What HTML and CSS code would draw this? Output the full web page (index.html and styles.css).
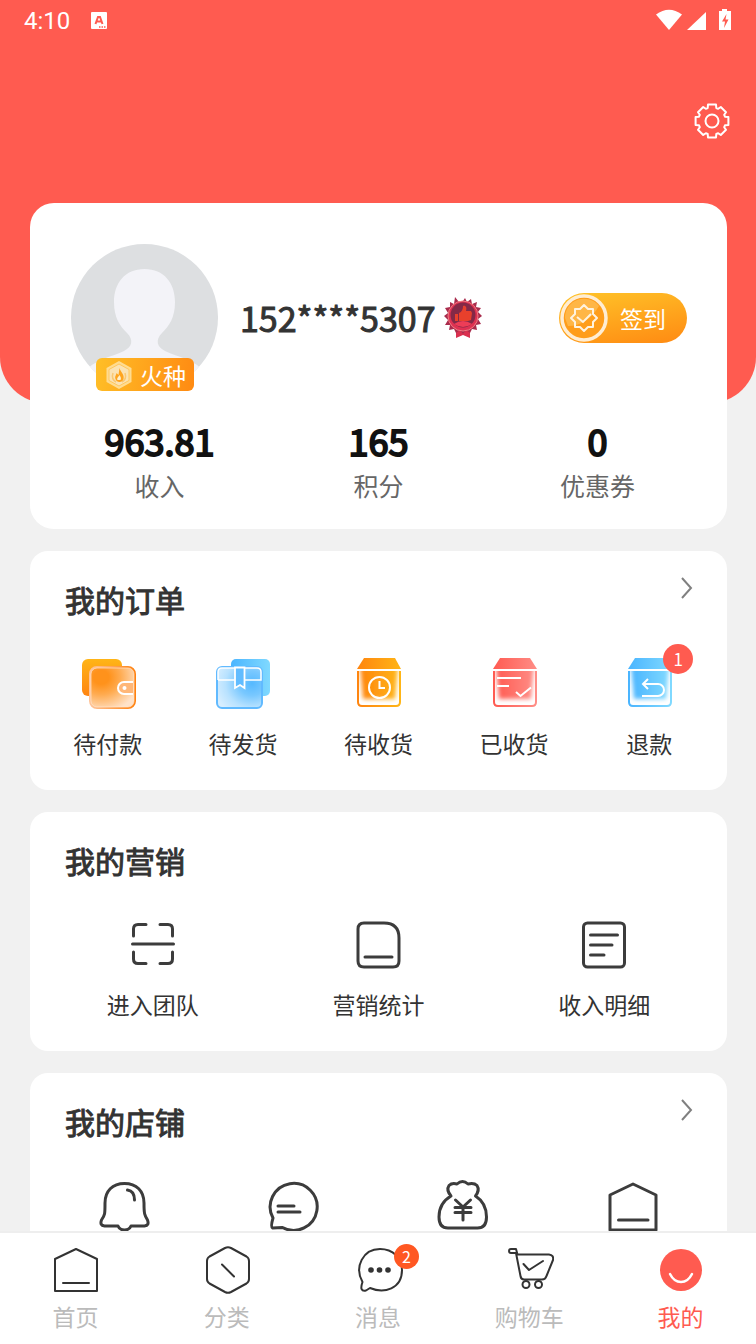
FILE: index.html
```html
<!DOCTYPE html>
<html lang="zh-CN">
<head>
  <meta charset="UTF-8">
  <meta name="viewport" content="width=device-width, initial-scale=1.0">
  <title>我的</title>
  <link rel="stylesheet" href="styles.css">
</head>
<body>
  <div class="screen">
    <header class="hero">
      <div class="status-bar">
        <span class="time">4:10</span>
        <svg class="app-icon" width="18" height="18" viewBox="0 0 18 18">
          <rect x="1" y="0" width="16" height="17" rx="1" fill="#fff"/>
          <path d="M5.500 12L8 5h2l2.500 7M7 9.500h4" fill="none" stroke="#ff5b50" stroke-width="2"/>
          <path d="M9 15h7" stroke="#ff5b50" stroke-width="1.500" stroke-dasharray="1.500 1"/>
        </svg>
        <svg class="signals" width="78" height="24" viewBox="0 0 78 24" fill="#fff">
          <path d="M0 5.500Q13-4 26 5.500L13 21z"/>
          <path d="M31 21L50 3v18z"/>
          <path d="M66 0h5v2h4v19H63V2h3z"/>
          <path d="M70.500 5L66 12.500h3l-1 6.500 4.500-8.500h-3z" fill="#ff5b50"/>
        </svg>
      </div>
      <button class="settings" type="button" aria-label="设置">
        <svg width="40" height="40" viewBox="-20 -20 40 40" fill="none" stroke="#fff" stroke-width="2" stroke-linejoin="round">
          <path d="M-4.300-13L-4-16.400H4L4.300-13L6.200-12.200L8.800-14L14-8.800L12.200-6.200L13-4.300L16.400-4V4L13 4.300L12.200 6.200L14 8.800L8.800 14L6.200 12.200L4.300 13L4 16.400H-4L-4.300 13L-6.200 12.200L-8.800 14L-14 8.800L-12.200 6.200L-13 4.300L-16.400 4V-4L-13-4.300L-12.200-6.200L-14-8.800L-8.800-14L-6.200-12.200Z"/>
          <circle r="6.500"/>
        </svg>
      </button>
    </header>

    <main class="content">
      <section class="card profile">
        <div class="user">
          <div class="avatar">
            <svg class="avatar-img" viewBox="0 0 147 147">
              <defs><clipPath id="round"><circle cx="73.500" cy="73.500" r="73.500"/></clipPath></defs>
              <g clip-path="url(#round)">
                <rect width="147" height="147" fill="#dddfe1"/>
                <path d="M73.500 25C93 25 104 39 104 58C104 74 98 82 91 89C84 96 86 103 94 107C107 113 124 116 134 128V147H13V128C23 116 40 113 53 107C61 103 63 96 56 89C49 82 43 74 43 58C43 39 54 25 73.500 25Z" fill="#f3f3f8"/>
              </g>
            </svg>
            <span class="level">
              <svg width="28" height="30" viewBox="0 0 28 30">
                <path d="M14 1L26.500 8V22L14 29L1.500 22V8z" fill="#ffdc91"/>
                <path d="M14 4L24 9.500V20.500L14 26L4 20.500V9.500z" fill="#fbe3b4" stroke="#ffc75e"/>
                <path d="M8 13q-2 6 3 9M20 13q2 6-3 9" fill="none" stroke="#f9c873" stroke-width="1.500"/>
                <path d="M14.500 8c1 4 5 6 4 11-1 4-7 4-8 0-1-3 1-4 1-6l2 2z" fill="#ffa51f"/>
                <path d="M14.500 15c1 2 2 3 1 5h-3c-1-2 1-3 2-5z" fill="#fff0cb"/>
              </svg>
              火种
            </span>
          </div>
          <h1 class="name">152****5307</h1>
          <svg class="medal" width="38" height="44" viewBox="0 0 38 44">
            <path d="M12 32h14v10l-7-3-7 3z" fill="#d9304f"/>
            <path d="M19 5L21 2L23 6L27 3L28 8L33 6L32 11L37 12L34 16L38 20L34 23L37 28L32 29L33 34L28 33L26 37L22 34L19 38L16 34L12 37L10 33L5 34L6 29L1 29L4 24L0 20L4 17L1 12L6 11L6 6L10 8L11 1L15 6Z" fill="#a92c4d"/>
            <circle cx="19" cy="20" r="15" fill="#df3152" stroke="#ee7d82"/>
            <circle cx="19" cy="19" r="12.500" fill="#842947"/>
            <path d="M10 28q9-6 18 0-9 6-18 0z" fill="#ed3d57"/>
            <path d="M11 18h3v7h-3zM15 17c3-1 4-4 4-7 3-1 4 2 3 5h5l1 2-1 7-3 1h-9z" fill="#e8402c"/>
          </svg>
          <button class="sign" type="button">
            <svg width="50" height="50" viewBox="0 0 50 50" fill="none">
              <circle cx="25" cy="25" r="22" fill="#ff9d1a" stroke="#ffedd2" stroke-width="3.500"/>
              <path d="M6 25a19 19 0 0 1 34-12Q28 33 9 33z" fill="#ffc05a" opacity=".7"/>
              <path d="M25 12l4 4h5v5l4 4-4 4v5h-5l-4 4-4-4h-5v-5l-4-4 4-4v-5h5z" stroke="#fff3df" stroke-width="2" stroke-linejoin="round"/>
              <path d="M18 24l6 5 8-8" stroke="#fff3df" stroke-width="2"/>
            </svg>
            <span>签到</span>
          </button>
        </div>
        <div class="stats">
          <a href="#"><strong>963.81</strong><span>收入</span></a>
          <a href="#"><strong>165</strong><span>积分</span></a>
          <a href="#"><strong>0</strong><span>优惠券</span></a>
        </div>
      </section>

      <section class="card">
        <div class="card-head">
          <h2>我的订单</h2>
          <a class="more" href="#" aria-label="全部订单">
            <svg width="14" height="24" viewBox="0 0 14 24"><path d="M2 2l9 10-9 10" fill="none" stroke="#808080" stroke-width="2"/></svg>
          </a>
        </div>
        <nav class="grid five">
          <a class="item" href="#">
            <svg class="icon" viewBox="0 0 60 60">
              <defs>
                <linearGradient id="gold" x2="0" y2="1"><stop stop-color="#ffb517"/><stop offset="1" stop-color="#ff8410"/></linearGradient>
                <linearGradient id="orange" x2="1"><stop stop-color="#ff850f"/><stop offset="1" stop-color="#ffb516"/></linearGradient>
                <linearGradient id="walletEdge" x2="1"><stop stop-color="#ffc499"/><stop offset="1" stop-color="#ff8210"/></linearGradient>
                <radialGradient id="walletFill" cx=".25" cy=".25" r=".85"><stop offset=".2" stop-color="#ff921b"/><stop offset=".5" stop-color="#ffab50"/><stop offset="1" stop-color="#ffe2c8"/></radialGradient>
                <filter id="soft" x="-20%" y="-20%" width="140%" height="140%"><feGaussianBlur stdDeviation="2"/></filter>
                <clipPath id="boxBody"><path d="M11 17H51V50Q51 51 50 51H12Q11 51 11 50Z"/></clipPath>
              </defs>
              <rect x="4" y="5" width="40" height="37" rx="6" fill="url(#gold)"/>
              <rect x="12" y="13" width="45" height="41" rx="7" fill="url(#walletFill)" stroke="url(#walletEdge)" stroke-width="2"/>
              <rect x="13" y="14" width="43" height="39" rx="6" fill="none" stroke="#ffe4cb" opacity=".7"/>
              <path d="M55 28H46a6 6 0 0 0 0 12h9" fill="#ffb778" stroke="#fff" stroke-width="2"/>
              <circle cx="46.500" cy="34" r="2" fill="#fff"/>
            </svg>
            <span>待付款</span>
          </a>
          <a class="item" href="#">
            <svg class="icon" viewBox="0 0 60 60">
              <defs>
                <linearGradient id="blue" x2="1"><stop stop-color="#4ab5ff"/><stop offset="1" stop-color="#80d9ff"/></linearGradient>
                <radialGradient id="parcel" cx=".78" cy=".4" r=".85"><stop stop-color="#55b9ff"/><stop offset=".35" stop-color="#79c8ff"/><stop offset=".7" stop-color="#b8e2ff"/><stop offset="1" stop-color="#d7eeff"/></radialGradient>
              </defs>
              <rect x="18" y="5" width="39" height="37" rx="5" fill="url(#blue)"/>
              <rect x="4" y="13" width="45" height="41" rx="5" fill="url(#parcel)" stroke="#61baff" stroke-width="2"/>
              <path d="M5 26V18q0-4 4-4H44q4 0 4 4V26H5" fill="none" stroke="#fff" stroke-width="1.500"/>
              <path d="M22 13.500H31.500V34L27 31L22 34z" fill="#61bcff" stroke="#fff" stroke-width="1.800"/>
            </svg>
            <span>待发货</span>
          </a>
          <a class="item" href="#">
            <svg class="icon" viewBox="0 0 60 60">
              <path d="M16 4H47L53 15H9z" fill="url(#orange)"/>
              <path d="M10 17V48Q10 52 14 52H48Q52 52 52 48V17" fill="#fff" stroke="url(#orange)" stroke-width="2"/>
              <g clip-path="url(#boxBody)"><path d="M12 12H50L47 45H15z" fill="url(#orange)" filter="url(#soft)"/></g>
              <circle cx="31.500" cy="33.500" r="10.500" fill="none" stroke="#fff" stroke-width="2"/>
              <path d="M31.500 27V34H37" fill="none" stroke="#fff" stroke-width="2"/>
            </svg>
            <span>待收货</span>
          </a>
          <a class="item" href="#">
            <svg class="icon" viewBox="0 0 60 60">
              <defs><linearGradient id="red" x2="1"><stop stop-color="#ff5b52"/><stop offset="1" stop-color="#ff8d86"/></linearGradient></defs>
              <path d="M16 4H46L53 15H9z" fill="url(#red)"/>
              <path d="M10 17V48Q10 52 14 52H48Q52 52 52 48V17" fill="#fff" stroke="url(#red)" stroke-width="2"/>
              <g clip-path="url(#boxBody)"><path d="M12 12H50L47 45H15z" fill="url(#red)" filter="url(#soft)"/></g>
              <path d="M13 24H37M13 32H25M32 38L36.500 42L47 33.500" fill="none" stroke="#fff" stroke-width="2"/>
            </svg>
            <span>已收货</span>
          </a>
          <a class="item" href="#">
            <svg class="icon" viewBox="0 0 60 60">
              <path d="M16 4H46L53 15H9z" fill="url(#blue)"/>
              <path d="M10 17V48Q10 52 14 52H48Q52 52 52 48V17" fill="#fff" stroke="url(#blue)" stroke-width="2"/>
              <g clip-path="url(#boxBody)"><path d="M12 12H50L47 45H15z" fill="url(#blue)" filter="url(#soft)"/></g>
              <path d="M29 25L24 30L29 35M24 30H39a6 6 0 0 1 0 12H23" fill="none" stroke="#fff" stroke-width="2"/>
            </svg>
            <span>退款</span>
            <b class="badge">1</b>
          </a>
        </nav>
      </section>

      <section class="card">
        <div class="card-head">
          <h2>我的营销</h2>
        </div>
        <nav class="grid three">
          <a class="item" href="#">
            <svg class="icon line" viewBox="0 0 60 60">
              <path d="M23 9.500H15Q10.500 9.500 10.500 14V21M37 9.500H45Q49.500 9.500 49.500 14V21M10.500 37V44Q10.500 48.500 15 48.500H23M49.500 37V44Q49.500 48.500 45 48.500H37M9.500 29H50.500"/>
            </svg>
            <span>进入团队</span>
          </a>
          <a class="item" href="#">
            <svg class="icon line" viewBox="0 0 60 60">
              <path d="M16 8H36Q51 8 51 23V46Q51 52 45 52H16Q10 52 10 46V14Q10 8 16 8ZM17 42H44"/>
            </svg>
            <span>营销统计</span>
          </a>
          <a class="item" href="#">
            <svg class="icon line" viewBox="0 0 60 60">
              <rect x="9.500" y="8" width="41" height="44" rx="4"/>
              <path d="M16.500 20H43.500M16.500 30H38M16.500 40H30"/>
            </svg>
            <span>收入明细</span>
          </a>
        </nav>
      </section>

      <section class="card">
        <div class="card-head">
          <h2>我的店铺</h2>
          <a class="more" href="#" aria-label="进入店铺">
            <svg width="14" height="24" viewBox="0 0 14 24"><path d="M2 2l9 10-9 10" fill="none" stroke="#808080" stroke-width="2"/></svg>
          </a>
        </div>
        <nav class="grid four">
          <a class="item" href="#" aria-label="通知">
            <svg class="icon line thin" viewBox="0 0 60 60">
              <path d="M29.500 7.500C41.500 7.500 49 15 49 27C49 38 49.500 39 52.500 44Q54.500 49.500 49.500 50H36Q34.500 54 29.500 54Q24.500 54 23 50H9.500Q4.500 49.500 6.500 44C10 39 10 38 10 27C10 15 17.500 7.500 29.500 7.500ZM32.500 14Q39.500 15 39.500 24"/>
            </svg>
          </a>
          <a class="item" href="#" aria-label="客服">
            <svg class="icon line thin" viewBox="0 0 60 60">
              <path d="M9 42A23.500 23.500 0 1 1 18.500 51.500L8.500 52Q6.500 51 9 42ZM14 30H30M14 36H36"/>
            </svg>
          </a>
          <a class="item" href="#" aria-label="资金">
            <svg class="icon line thin" viewBox="0 0 60 60">
              <path d="M18 20Q13 14 16 9.500Q19 6.500 24 8Q29.500 3 35 8Q41 6.500 44 9.500Q47 14 42.500 20Q53.500 27 53.500 41Q53.500 52 44.500 52H15Q6 52 6 41Q6 27 18 20ZM22.500 24L30 31L37.500 24M22 31.500H38M22 36.500H38M30 31V44"/>
            </svg>
          </a>
          <a class="item" href="#" aria-label="店铺">
            <svg class="icon line thin" viewBox="0 0 60 60">
              <path d="M31 8L54 19V54H8V19ZM16.500 44H46"/>
            </svg>
          </a>
        </nav>
      </section>
    </main>
  </div>

  <nav class="tab-bar">
    <a class="tab" href="#">
      <svg width="50" height="50" viewBox="0 0 50 50"><path d="M25 4L46 14V46H4V14ZM12 38H38"/></svg>
      <span>首页</span>
    </a>
    <a class="tab" href="#">
      <svg width="50" height="50" viewBox="0 0 50 50"><path d="M23 3Q26 1.500 29 3L44.500 11.500Q47 13 47 16V34Q47 37 44.500 38.500L29 47Q26 48.500 23 47L7.500 38.500Q5 37 5 34V16Q5 13 7.500 11.500ZM20 19.500L32 31.500"/></svg>
      <span>分类</span>
    </a>
    <a class="tab" href="#">
      <svg width="50" height="50" viewBox="0 0 50 50">
        <path d="M9.500 37C1 22 10 4 27 4C40 4 49 13 49 25C49 44 31 49 17 43L13 45.500Q6 47 9.500 37Z"/>
        <g class="dots"><circle cx="18" cy="25" r="2.800"/><circle cx="26.500" cy="25" r="2.800"/><circle cx="35" cy="25" r="2.800"/></g>
      </svg>
      <span>消息</span>
      <b class="badge small">2</b>
    </a>
    <a class="tab" href="#">
      <svg width="50" height="50" viewBox="0 0 50 50">
        <path d="M12 8H7Q5 8 5 6T7 4H12L13.500 9.500H45Q50 10 49 15L42.500 31Q41.500 34.500 38 34.500H20Q17 34.500 16.500 31L12 8ZM19.500 19L25 25L39 16"/>
        <circle cx="22" cy="39.500" r="3.500"/><circle cx="34.500" cy="39.500" r="3.500"/>
      </svg>
      <span>购物车</span>
    </a>
    <a class="tab active" href="#">
      <svg width="50" height="50" viewBox="0 0 50 50"><circle class="face" cx="26" cy="25" r="21"/><path class="smile" d="M15 29Q19 37 26 37T37 29"/></svg>
      <span>我的</span>
    </a>
  </nav>
</body>
</html>
```
FILE: styles.css
```css
* {
  box-sizing: border-box;
}
body {
  margin: 0;
  height: 100vh;
  display: flex;
  flex-direction: column;
  font-family: "Noto Sans CJK SC", sans-serif;
  font-size: 23px;
  color: #333;
  background: #f1f1f1;
}
a {
  color: inherit;
  text-decoration: none;
}
button {
  border: none;
  background: none;
  padding: 0;
  font: inherit;
  cursor: pointer;
}
svg {
  display: block;
  flex-shrink: 0;
}
h1, h2 {
  margin: 0;
}
.screen {
  flex: 1;
  min-height: 0;
  overflow-y: auto;
  scrollbar-width: none;
}

/* header */
.hero {
  height: 403px;
  background: #ff5b50;
  border-radius: 0 0 46px 46px;
}
.status-bar {
  display: flex;
  align-items: center;
  height: 42px;
  padding: 0 22px 0 24px;
}
.time {
  font-family: Roboto, sans-serif;
  font-size: 24px;
  color: #fff;
}
.app-icon {
  margin-left: 20px;
}
.signals {
  margin-left: auto;
}
.settings {
  display: block;
  margin: 59px 24px 0 auto;
}

/* cards */
.content {
  display: flex;
  flex-direction: column;
  gap: 22px;
  margin-top: -200px;
  padding: 0 29px 22px 30px;
}
.card {
  background: #fff;
  border-radius: 18px;
  padding: 25px 10px 30px;
}
.profile {
  border-radius: 24px;
  padding: 41px 20px 26px;
}
.user {
  display: flex;
  align-items: center;
  padding: 0 20px 0 21px;
}
.avatar {
  position: relative;
  width: 147px;
  height: 147px;
  margin-right: 22px;
}
.level {
  position: absolute;
  left: 25px;
  bottom: 0;
  display: flex;
  align-items: center;
  gap: 7px;
  width: 98px;
  height: 33px;
  padding-left: 9px;
  border-radius: 6px;
  background: linear-gradient(100deg, #ffbf27, #ff8a12);
  color: #fff;
  white-space: nowrap;
}
.name, .stats strong, .card-head h2 {
  font-weight: 400;
  -webkit-text-stroke: 1px currentColor;
}
.name {
  font-size: 34px;
  line-height: 50px;
}
.medal {
  margin-left: 8px;
}
.sign {
  display: flex;
  align-items: center;
  gap: 11px;
  width: 128px;
  height: 50px;
  margin-left: auto;
  border-radius: 25px;
  background: linear-gradient(170deg, #ffc429, #ff8a12);
  color: #fff;
}
.stats {
  display: grid;
  grid-template-columns: repeat(3, 1fr);
  margin-top: 24px;
  text-align: center;
}
.stats strong {
  display: block;
  font-size: 36px;
  line-height: 50px;
  color: #111;
  -webkit-text-stroke-width: 2px;
}
.stats span {
  display: block;
  margin-top: 2px;
  font-size: 25px;
  line-height: 36px;
  color: #666;
}
.card-head {
  display: flex;
  justify-content: space-between;
  padding: 0 23px 0 25px;
  height: 46px;
}
.card-head h2 {
  font-size: 30px;
  line-height: 46px;
}
.grid {
  display: grid;
  margin-top: 32px;
}
.five {
  grid-template-columns: repeat(5, 1fr);
}
.four {
  grid-template-columns: repeat(4, 1fr);
}
.three {
  grid-template-columns: repeat(3, 1fr);
}
.item {
  position: relative;
  display: flex;
  flex-direction: column;
  align-items: center;
  gap: 12px;
  line-height: 34px;
}
.icon {
  width: 60px;
  height: 60px;
}
.line {
  fill: none;
  stroke: #3c3c3c;
  stroke-width: 3;
  stroke-linecap: round;
  stroke-linejoin: round;
}
.badge {
  position: absolute;
  top: -10px;
  left: calc(50% + 14px);
  width: 30px;
  height: 30px;
  border-radius: 50%;
  background: #ff5b50;
  color: #fff;
  font-size: 17px;
  font-weight: 400;
  line-height: 30px;
  text-align: center;
}
.badge.small {
  top: 11px;
  left: calc(50% + 16px);
  width: 25px;
  height: 25px;
  background: #ff5722;
  font-size: 16px;
  line-height: 25px;
}

/* bottom tabs */
.tab-bar {
  display: grid;
  grid-template-columns: repeat(5, 1fr);
  border-top: 2px solid #eee;
  background: #fff;
}
.tab {
  position: relative;
  display: flex;
  flex-direction: column;
  align-items: center;
  gap: 4px;
  padding: 12px 0 11px;
  line-height: 34px;
  color: #bbb;
}
.tab svg {
  fill: none;
  stroke: #333;
  stroke-width: 2;
  stroke-linecap: round;
  stroke-linejoin: round;
}
.tab .dots {
  fill: #333;
  stroke: none;
}
.tab .face {
  fill: #ff5b50;
  stroke: none;
}
.tab .smile {
  stroke: #fff;
  stroke-width: 2.5;
}
.tab.active {
  color: #ff5b50;
}
```
